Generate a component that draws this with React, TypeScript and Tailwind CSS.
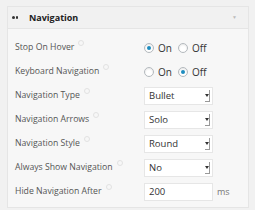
import React from "react";

const font = { fontFamily: '"Open Sans", "Liberation Sans", sans-serif' };

function Help() {
  return (
    <span className="inline-block w-[6px] h-[6px] rounded-full border border-[#e2e2e2] ml-[4px] -translate-y-[5px]" />
  );
}

function Radio({ checked }: { checked: boolean }) {
  return (
    <span className="inline-flex items-center justify-center w-[10px] h-[10px] rounded-full border border-[#b4b9be] bg-white shadow-[inset_0_1px_2px_rgba(0,0,0,0.1)]">
      {checked && <span className="w-[4px] h-[4px] rounded-full bg-[#1e8cbe]" />}
    </span>
  );
}

function Select({ value }: { value: string }) {
  return (
    <div className="w-[69px] h-[18px] bg-white border border-[#e6e6e6] flex items-center justify-between pl-[4px] pr-[2px]">
      <span className="text-[9.5px] text-[#333]">{value}</span>
      <span className="w-[5px] h-[12px] border-r border-b border-[#999] flex items-center justify-center">
        <svg width="4" height="3" viewBox="0 0 4 3"><path d="M0 0h4L2 3z" fill="#333" /></svg>
      </span>
    </div>
  );
}

function Row({ label, children }: { label: string; children: React.ReactNode }) {
  return (
    <div className="flex items-center h-[24px]">
      <div className="w-[129px] text-[8.7px] text-[#555] flex items-center">
        <span>{label}</span>
        <Help />
      </div>
      <div className="flex items-center">{children}</div>
    </div>
  );
}

export default function App() {
  return (
    <div className="w-[255px] h-[210px] bg-[#f1f1f1] pt-[6px] pl-[7px] pr-[6px] overflow-hidden" style={font}>
      <div className="border border-[#e5e5e5] bg-[#f7f7f7] h-[202px]">
        <div className="h-[22px] bg-[#f1f1f1] border-b border-[#e5e5e5] flex items-center pl-[4px] pr-[11px]">
          <span className="flex gap-[1px] mr-[11px]">
            <span className="w-[2.5px] h-[2.5px] rounded-full bg-[#333]" />
            <span className="w-[2.5px] h-[2.5px] rounded-full bg-[#333]" />
          </span>
          <span className="text-[9px] font-bold text-[#222]">Navigation</span>
          <span className="ml-auto text-[5px] text-[#bbb]">▼</span>
        </div>
        <div className="pl-[7px] pt-[7px]">
          <Row label="Stop On Hover">
            <Radio checked />
            <span className="text-[10px] text-[#333] ml-[4px] mr-[6px]">On</span>
            <Radio checked={false} />
            <span className="text-[10px] text-[#333] ml-[4px]">Off</span>
          </Row>
          <Row label="Keyboard Navigation">
            <Radio checked={false} />
            <span className="text-[10px] text-[#333] ml-[4px] mr-[6px]">On</span>
            <Radio checked />
            <span className="text-[10px] text-[#333] ml-[4px]">Off</span>
          </Row>
          <Row label="Navigation Type"><Select value="Bullet" /></Row>
          <Row label="Navigation Arrows"><Select value="Solo" /></Row>
          <Row label="Navigation Style"><Select value="Round" /></Row>
          <Row label="Always Show Navigation"><Select value="No" /></Row>
          <Row label="Hide Navigation After">
            <div className="w-[69px] h-[18px] bg-white border border-[#e6e6e6] flex items-center pl-[4px] text-[9.5px] text-[#333]">200</div>
            <span className="ml-[4px] text-[9px] text-[#777]">ms</span>
          </Row>
        </div>
      </div>
    </div>
  );
}
